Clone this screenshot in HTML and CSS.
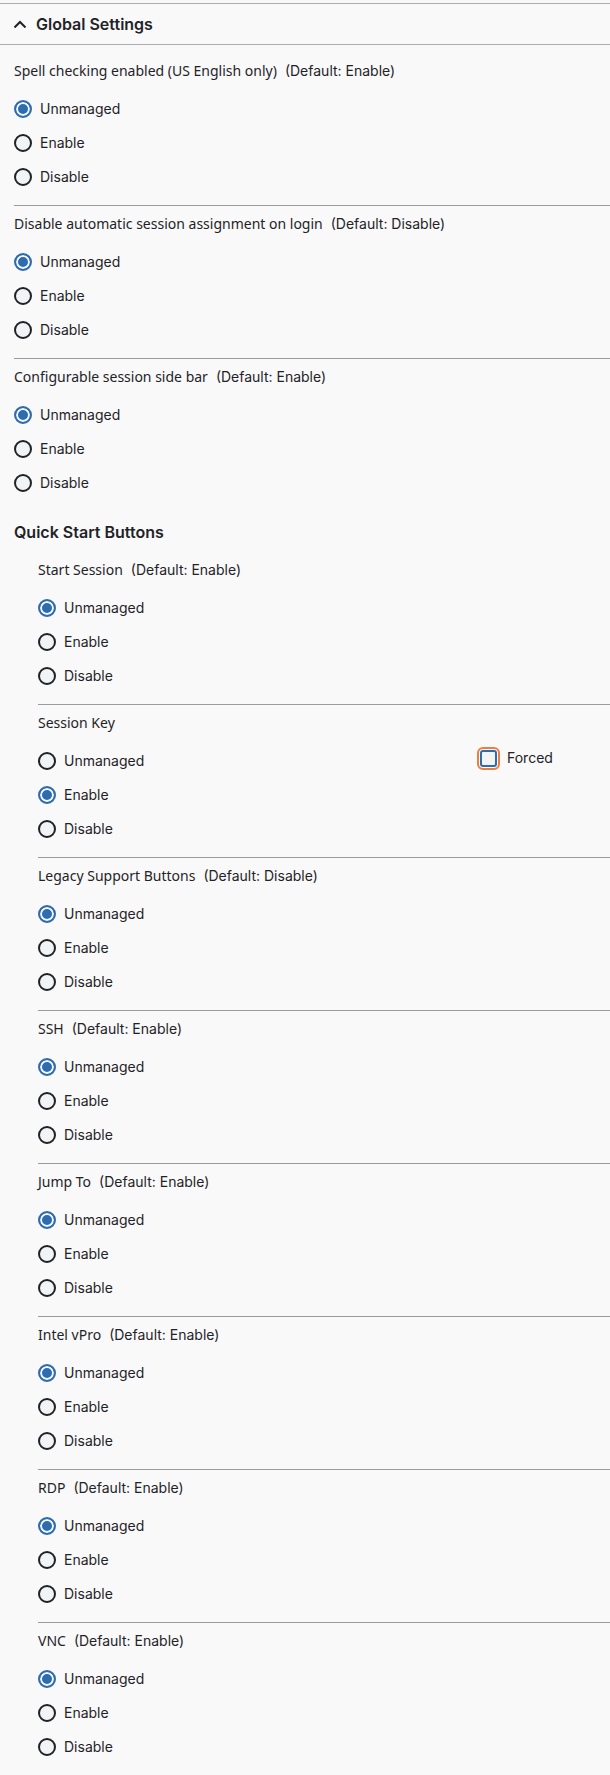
FILE: index.html
```html
<!DOCTYPE html>
<html lang="en">
<head>
<meta charset="utf-8">
<title>Global Settings</title>
<link rel="stylesheet" href="styles.css">
</head>
<body>
<div class="panel">
  <div class="panel-header">
    <svg class="chevron" width="12" height="8" viewBox="0 0 12 8"><polyline points="1.2,6.8 6,2 10.8,6.8" fill="none" stroke="#1f2328" stroke-width="2" stroke-linecap="square"/></svg>
    <span class="panel-title">Global Settings</span>
  </div>
  <div class="panel-body">
    <div class="setting">
      <div class="setting-label">Spell checking enabled (US English only)<span class="default">(Default: Enable)</span></div>
      <div class="radios">
        <label class="radio"><input type="radio" name="s1" checked><span>Unmanaged</span></label>
        <label class="radio"><input type="radio" name="s1"><span>Enable</span></label>
        <label class="radio"><input type="radio" name="s1"><span>Disable</span></label>
      </div>
    </div>
    <div class="setting">
      <div class="setting-label">Disable automatic session assignment on login<span class="default">(Default: Disable)</span></div>
      <div class="radios">
        <label class="radio"><input type="radio" name="s2" checked><span>Unmanaged</span></label>
        <label class="radio"><input type="radio" name="s2"><span>Enable</span></label>
        <label class="radio"><input type="radio" name="s2"><span>Disable</span></label>
      </div>
    </div>
    <div class="setting">
      <div class="setting-label">Configurable session side bar<span class="default">(Default: Enable)</span></div>
      <div class="radios">
        <label class="radio"><input type="radio" name="s3" checked><span>Unmanaged</span></label>
        <label class="radio"><input type="radio" name="s3"><span>Enable</span></label>
        <label class="radio"><input type="radio" name="s3"><span>Disable</span></label>
      </div>
    </div>

    <h3 class="group-title">Quick Start Buttons</h3>
    <div class="group">
      <div class="setting">
        <div class="setting-label">Start Session<span class="default">(Default: Enable)</span></div>
        <div class="radios">
          <label class="radio"><input type="radio" name="q1" checked><span>Unmanaged</span></label>
          <label class="radio"><input type="radio" name="q1"><span>Enable</span></label>
          <label class="radio"><input type="radio" name="q1"><span>Disable</span></label>
        </div>
      </div>
      <div class="setting">
        <div class="setting-label">Session Key</div>
        <div class="setting-row">
          <div class="radios">
            <label class="radio"><input type="radio" name="q2"><span>Unmanaged</span></label>
            <label class="radio"><input type="radio" name="q2" checked><span>Enable</span></label>
            <label class="radio"><input type="radio" name="q2"><span>Disable</span></label>
          </div>
          <label class="check"><input type="checkbox"><span>Forced</span></label>
        </div>
      </div>
      <div class="setting">
        <div class="setting-label">Legacy Support Buttons<span class="default">(Default: Disable)</span></div>
        <div class="radios">
          <label class="radio"><input type="radio" name="q3" checked><span>Unmanaged</span></label>
          <label class="radio"><input type="radio" name="q3"><span>Enable</span></label>
          <label class="radio"><input type="radio" name="q3"><span>Disable</span></label>
        </div>
      </div>
      <div class="setting">
        <div class="setting-label">SSH<span class="default">(Default: Enable)</span></div>
        <div class="radios">
          <label class="radio"><input type="radio" name="q4" checked><span>Unmanaged</span></label>
          <label class="radio"><input type="radio" name="q4"><span>Enable</span></label>
          <label class="radio"><input type="radio" name="q4"><span>Disable</span></label>
        </div>
      </div>
      <div class="setting">
        <div class="setting-label">Jump To<span class="default">(Default: Enable)</span></div>
        <div class="radios">
          <label class="radio"><input type="radio" name="q5" checked><span>Unmanaged</span></label>
          <label class="radio"><input type="radio" name="q5"><span>Enable</span></label>
          <label class="radio"><input type="radio" name="q5"><span>Disable</span></label>
        </div>
      </div>
      <div class="setting">
        <div class="setting-label">Intel vPro<span class="default">(Default: Enable)</span></div>
        <div class="radios">
          <label class="radio"><input type="radio" name="q6" checked><span>Unmanaged</span></label>
          <label class="radio"><input type="radio" name="q6"><span>Enable</span></label>
          <label class="radio"><input type="radio" name="q6"><span>Disable</span></label>
        </div>
      </div>
      <div class="setting">
        <div class="setting-label">RDP<span class="default">(Default: Enable)</span></div>
        <div class="radios">
          <label class="radio"><input type="radio" name="q7" checked><span>Unmanaged</span></label>
          <label class="radio"><input type="radio" name="q7"><span>Enable</span></label>
          <label class="radio"><input type="radio" name="q7"><span>Disable</span></label>
        </div>
      </div>
      <div class="setting">
        <div class="setting-label">VNC<span class="default">(Default: Enable)</span></div>
        <div class="radios">
          <label class="radio"><input type="radio" name="q8" checked><span>Unmanaged</span></label>
          <label class="radio"><input type="radio" name="q8"><span>Enable</span></label>
          <label class="radio"><input type="radio" name="q8"><span>Disable</span></label>
        </div>
      </div>
    </div>
  </div>
</div>
</body>
</html>
```

FILE: styles.css
```css
html, body {
  margin: 0;
  padding: 0;
  background: #f9f9f9;
}

body {
  font-family: Inter, "Noto Sans", sans-serif;
  font-size: 14px;
  color: #1f2328;
  padding-top: 3px;
}

.panel-header {
  display: flex;
  align-items: center;
  gap: 10px;
  height: 40px;
  padding-left: 14px;
  border-top: 1px solid #a9adb2;
  border-bottom: 1px solid #a9adb2;
}

.chevron {
  display: block;
  margin-top: -1px;
}

.panel-title {
  font-size: 16px;
  font-weight: 600;
  line-height: 22px;
}

.panel-body {
  padding-left: 14px;
}

.setting {
  padding: 8px 0 11px;
  border-top: 1px solid #9b9b9b;
}

.panel-body > .setting:first-child {
  border-top: none;
  padding-top: 16px;
}

.group-title + .group > .setting:first-child {
  border-top: none;
}

.setting-label {
  font-family: "Noto Sans", sans-serif;
  font-size: 14px;
  line-height: 20px;
  margin-bottom: 11px;
}

.default {
  font-family: Inter, sans-serif;
  margin-left: 8px;
}

.radios {
  display: flex;
  flex-direction: column;
}

.radio {
  display: flex;
  align-items: center;
  gap: 8px;
  height: 34px;
  line-height: 20px;
}

.radio input {
  appearance: none;
  -webkit-appearance: none;
  margin: 0;
  width: 18px;
  height: 18px;
  border: 2px solid #1f2328;
  border-radius: 50%;
  background: #f2f3f5;
  box-sizing: border-box;
  flex: 0 0 auto;
}

.radio input:checked {
  border-color: #2e6cb2;
  background: #2e6cb2;
  box-shadow: inset 0 0 0 2px #f7f8fa;
}

.group-title {
  margin: 10px 0 9px;
  font-size: 16px;
  font-weight: 600;
  line-height: 22px;
}

.group {
  padding-left: 24px;
}

.setting-row {
  display: flex;
  align-items: flex-start;
}

.setting-row .radios {
  flex: 0 0 442px;
}

.check {
  display: flex;
  align-items: center;
  gap: 10px;
  margin-top: 4px;
  line-height: 20px;
}

.check input {
  appearance: none;
  -webkit-appearance: none;
  margin: 0;
  width: 17px;
  height: 17px;
  box-sizing: border-box;
  border: 2px solid #2e6cb2;
  border-radius: 3px;
  background: #f2f3f5;
  outline: 2px solid #f07d3c;
  outline-offset: 1px;
}
```
